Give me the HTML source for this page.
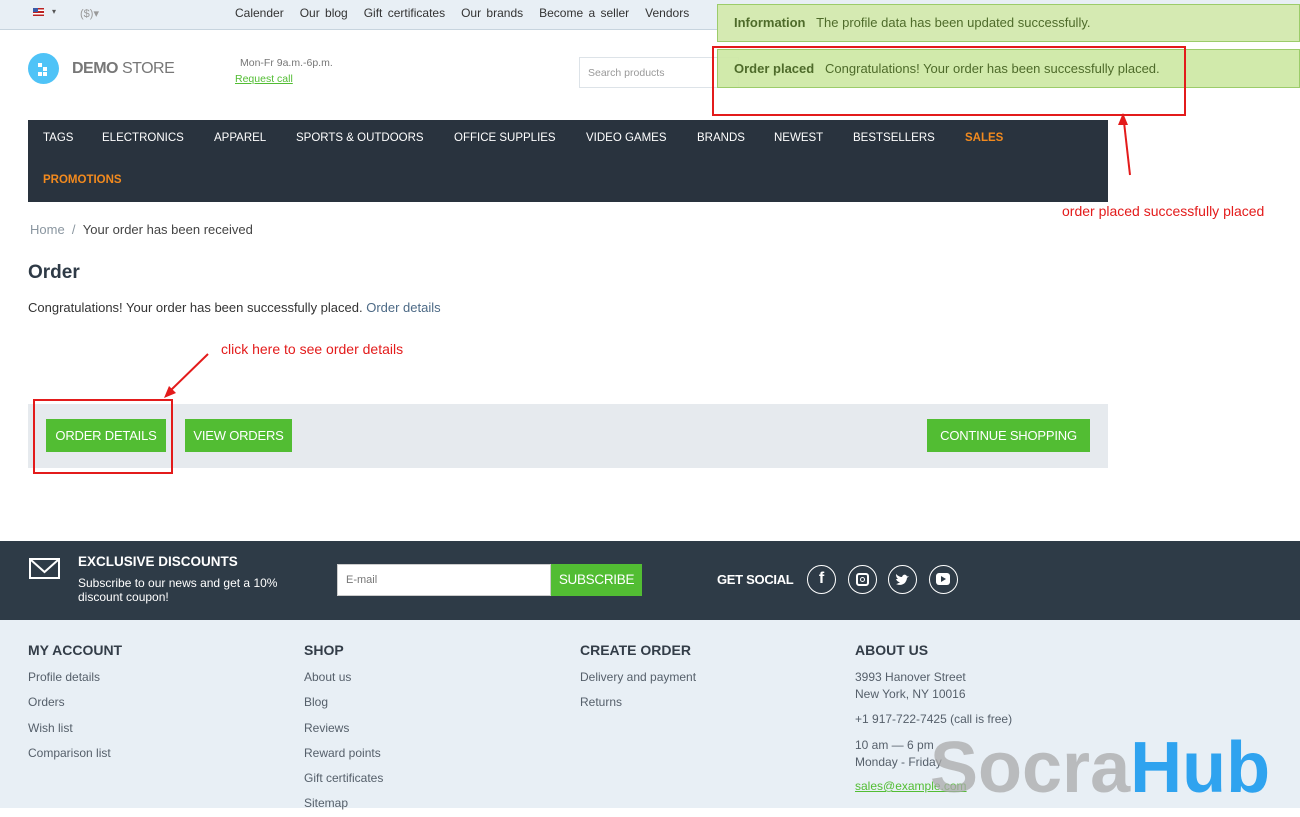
<!DOCTYPE html>
<html><head><meta charset="utf-8"><style>
*{margin:0;padding:0;box-sizing:border-box}
body{width:1300px;height:808px;overflow:hidden;position:relative;background:#fff;font-family:"Liberation Sans",sans-serif;color:#2e3a46}
.a{position:absolute;white-space:nowrap}
.nav span{position:absolute;top:12px;font-size:11.5px;color:#fff}
.btn{position:absolute;background:#52bd33;color:#fff;font-size:13px;height:33px;line-height:33px;text-align:center;letter-spacing:-0.2px;overflow:hidden}
.fh{font-size:14px;font-weight:bold;color:#333d48}
.fl{font-size:12px;color:#555f6a}
</style></head><body>
<div class="a" style="left:0;top:0;width:1300px;height:30px;background:#e8eff5;border-bottom:1px solid #c7d4de"></div>
<div class="a" style="left:33px;top:8px;width:11px;height:8px;background:linear-gradient(#b22 0 20%,#fff 20% 40%,#b22 40% 60%,#fff 60% 80%,#b22 80%)"></div>
<div class="a" style="left:33px;top:8px;width:5px;height:4px;background:#3b5ba8"></div>
<div class="a" style="left:52px;top:7px;font-size:8px;color:#555">▾</div>
<div class="a" style="left:80px;top:7px;font-size:11px;color:#999">($)▾</div>
<div class="a" style="left:235px;top:6px;font-size:12px;color:#333;word-spacing:2px">Calender &nbsp;&nbsp;Our blog &nbsp;&nbsp;Gift certificates &nbsp;&nbsp;Our brands &nbsp;&nbsp;Become a seller &nbsp;&nbsp;Vendors</div>

<div class="a" style="left:28px;top:53px;width:31px;height:31px;border-radius:50%;background:#4fc3f7"></div>
<div class="a" style="left:38px;top:63px;width:4px;height:4px;background:#fff"></div>
<div class="a" style="left:43px;top:67px;width:4px;height:4px;background:#fff"></div>
<div class="a" style="left:38px;top:72px;width:4px;height:4px;background:#fff"></div>
<div class="a" style="left:43px;top:72px;width:4px;height:4px;background:#fff"></div>
<div class="a" style="left:72px;top:60px;font-size:16px;color:#777;letter-spacing:-0.5px"><b>DEMO</b> STORE</div>
<div class="a" style="left:240px;top:57px;font-size:10.5px;color:#777">Mon-Fr 9a.m.-6p.m.</div>
<div class="a" style="left:235px;top:73px;font-size:10.5px;color:#52bd33;text-decoration:underline">Request call</div>
<div class="a" style="left:579px;top:57px;width:160px;height:31px;border:1px solid #dde3e8"></div>
<div class="a" style="left:588px;top:67px;font-size:10.5px;color:#999">Search products</div>

<div class="a nav" style="left:28px;top:120px;width:1080px;height:82px;background:#29333e">
<span style="left:15px">TAGS</span><span style="left:74px">ELECTRONICS</span><span style="left:186px">APPAREL</span><span style="left:268px">SPORTS &amp; OUTDOORS</span><span style="left:426px">OFFICE SUPPLIES</span><span style="left:558px">VIDEO GAMES</span><span style="left:669px">BRANDS</span><span style="left:746px">NEWEST</span><span style="left:825px">BESTSELLERS</span><span style="left:937px;color:#f28a1e;font-weight:bold">SALES</span><span style="left:15px;top:54px;color:#f28a1e;font-weight:bold">PROMOTIONS</span>
</div>

<div class="a" style="left:30px;top:222px;font-size:13px;color:#8a96a0">Home &nbsp;/ &nbsp;<span style="color:#444">Your order has been received</span></div>
<div class="a" style="left:28px;top:262px;font-size:19px;font-weight:bold;color:#2e3a46">Order</div>
<div class="a" style="left:28px;top:300px;font-size:13px;color:#333">Congratulations! Your order has been successfully placed. <span style="color:#4d6a86">Order details</span></div>

<div class="a" style="left:28px;top:404px;width:1080px;height:64px;background:#e6eaee"></div>
<div class="btn" style="left:46px;top:419px;width:120px">ORDER DETAILS</div>
<div class="btn" style="left:185px;top:419px;width:107px">VIEW ORDERS</div>
<div class="btn" style="left:927px;top:419px;width:163px">CONTINUE SHOPPING</div>

<div class="a" style="left:0;top:541px;width:1300px;height:79px;background:#2e3b47"></div>
<div class="a" style="left:29px;top:558px;width:31px;height:21px;border:2px solid #fff"></div>
<svg class="a" style="left:29px;top:558px" width="31" height="21"><path d="M2 2L15.5 14L29 2" stroke="#fff" stroke-width="2" fill="none"/></svg>
<div class="a" style="left:78px;top:554px;font-size:13.5px;font-weight:bold;color:#fff">EXCLUSIVE DISCOUNTS</div>
<div class="a" style="left:78px;top:576px;font-size:12px;color:#fff;line-height:14px;white-space:normal;width:220px">Subscribe to our news and get a 10% discount coupon!</div>
<div class="a" style="left:337px;top:564px;width:214px;height:32px;background:#fff;border:1px solid #ccc;font-size:11px;color:#777;padding:9px 8px">E-mail</div>
<div class="a" style="left:551px;top:564px;width:91px;height:32px;background:#52bd33;color:#fff;font-size:13.5px;line-height:32px;text-align:center;letter-spacing:-0.3px">SUBSCRIBE</div>
<div class="a" style="left:717px;top:572px;font-size:13px;font-weight:bold;color:#fff;letter-spacing:-0.3px">GET SOCIAL</div>
<div class="a" style="left:807px;top:565px;width:29px;height:29px;border:1.5px solid #fff;border-radius:50%;color:#fff;text-align:center;font-weight:bold;font-size:16px;line-height:26px">f</div>
<div class="a" style="left:848px;top:565px;width:29px;height:29px;border:1.5px solid #fff;border-radius:50%"></div>
<div class="a" style="left:856px;top:573px;width:13px;height:13px;border:2px solid #fff;border-radius:3px"></div>
<div class="a" style="left:860px;top:577px;width:5px;height:5px;border:1.5px solid #fff;border-radius:50%"></div>
<div class="a" style="left:888px;top:565px;width:29px;height:29px;border:1.5px solid #fff;border-radius:50%"></div>
<svg class="a" style="left:895px;top:573px" width="16" height="14"><path d="M1 11c4 2 10 1 11-6l2-2-2 .5C11 1 8 1 7 4 5 4 3 3 1 1c0 3 1 4 2 5H1c1 2 2 3 4 3-1 1-3 2-4 2z" fill="#fff"/></svg>
<div class="a" style="left:929px;top:565px;width:29px;height:29px;border:1.5px solid #fff;border-radius:50%"></div>
<div class="a" style="left:936px;top:573px;width:14px;height:12px;background:#fff;border-radius:3px"></div>
<svg class="a" style="left:941px;top:576px" width="6" height="6"><path d="M0 0L5 3L0 6z" fill="#2e3b47"/></svg>

<div class="a" style="left:0;top:620px;width:1300px;height:188px;background:#e8eff5"></div>
<div class="a fh" style="left:28px;top:642px">MY ACCOUNT</div>
<div class="a fh" style="left:304px;top:642px">SHOP</div>
<div class="a fh" style="left:580px;top:642px">CREATE ORDER</div>
<div class="a fh" style="left:855px;top:642px">ABOUT US</div>
<div class="a fl" style="left:28px;top:665px;line-height:25.3px">Profile details<br>Orders<br>Wish list<br>Comparison list</div>
<div class="a fl" style="left:304px;top:665px;line-height:25.3px">About us<br>Blog<br>Reviews<br>Reward points<br>Gift certificates<br>Sitemap</div>
<div class="a fl" style="left:580px;top:665px;line-height:25.3px">Delivery and payment<br>Returns</div>
<div class="a fl" style="left:855px;top:669px;line-height:17px">3993 Hanover Street<br>New York, NY 10016</div>
<div class="a fl" style="left:855px;top:712px">+1 917-722-7425 (call is free)</div>
<div class="a fl" style="left:855px;top:737px;line-height:17px">10 am — 6 pm<br>Monday - Friday</div>
<div class="a fl" style="left:855px;top:779px;color:#52bd33;text-decoration:underline">sales@example.com</div>
<div class="a" style="left:930px;top:728px;font-size:72px;line-height:80px;font-weight:bold;color:rgba(170,170,170,.75)">Socra<span style="color:#2fa3ef">Hub</span></div>

<div class="a" style="left:717px;top:4px;width:583px;height:38px;background:#d5eab2;border:1px solid #9ccc6a;font-size:13px;color:#4e6b2a;padding:10px 16px"><b>Information</b>&nbsp;&nbsp; The profile data has been updated successfully.</div>
<div class="a" style="left:717px;top:49px;width:583px;height:39px;background:rgba(205,232,165,.93);border:1px solid #9ccc6a;font-size:13px;color:#4e6b2a;padding:11px 16px"><b>Order placed</b>&nbsp;&nbsp; Congratulations! Your order has been successfully placed.</div>
<div class="a" style="left:712px;top:46px;width:474px;height:70px;border:2px solid #e31b1b"></div>
<div class="a" style="left:33px;top:399px;width:140px;height:75px;border:2px solid #e31b1b"></div>
<svg class="a" style="left:0;top:0" width="1300" height="808"><g stroke="#e31b1b" stroke-width="2" fill="#e31b1b"><line x1="1130" y1="175" x2="1124" y2="122"/><path d="M1123 113l-5 12h10z" stroke="none"/><line x1="208" y1="354" x2="170" y2="391"/><path d="M164 398l5-12 7 7z" stroke="none"/></g></svg>
<div class="a" style="left:1062px;top:203px;font-size:14px;color:#e31b1b">order placed successfully placed</div>
<div class="a" style="left:221px;top:341px;font-size:14px;color:#e31b1b">click here to see order details</div>
</body></html>
